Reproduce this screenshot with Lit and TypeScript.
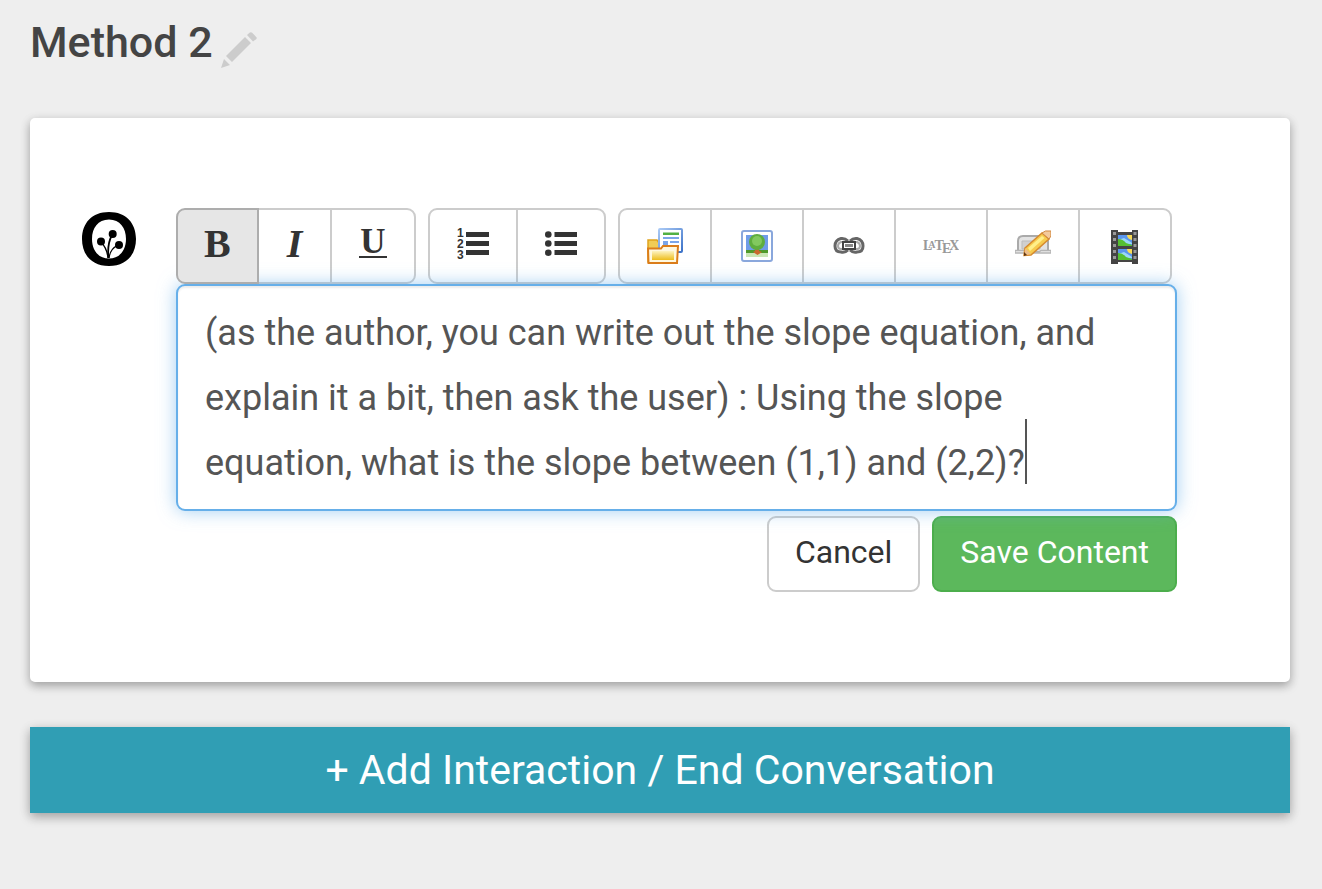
import { LitElement, html, css, svg } from "lit";
import { customElement, state } from "lit/decorators.js";

const pencil = svg`
  <svg viewBox="0 0 36 36" width="36" height="36" aria-hidden="true">
    <path fill="#ccc" d="M0 36 3 27 9 33ZM5 24 24 5 30 11 11 30ZM26 3 28.800.600Q30 -.300 31.200.800L35.200 5Q36.300 6 35.200 7.200L32 9.500Z"/>
  </svg>`;

const logo = svg`
  <svg viewBox="0 0 54 54" width="54" height="54" role="img" aria-label="Author">
    <path fill="#000" fill-rule="evenodd" d="M27 0C44 0 54 11 54 27S44 54 27 54 0 43 0 27 10 0 27 0ZM27 7.500C16 7.500 10 16 10 27S16 46.500 27 46.500 44 38 44 27 38 7.500 27 7.500Z"/>
    <g fill="none" stroke="#000" stroke-width="1.300"><path d="M26 46Q25 36 19 30"/><path stroke-width="1.800" d="M26.500 46Q25 32 30 23"/><path d="M27 46Q28 37 36 33"/></g>
    <circle cx="19" cy="29.500" r="4"/><circle cx="30.700" cy="22" r="4"/><circle cx="37" cy="33" r="4"/>
  </svg>`;

const orderedIcon = svg`
  <svg viewBox="0 0 32 36" width="32" height="36" aria-hidden="true">
    <g class="numeral"><text x="0" y="9">1</text><text x="0" y="20">2</text><text x="0" y="31">3</text></g>
    <path fill="#333" d="M9 4H32V9H9ZM9 13H32V18H9ZM9 22H32V27H9Z"/>
  </svg>`;

const bulletIcon = svg`
  <svg viewBox="0 0 32 36" width="32" height="36" aria-hidden="true">
    <g fill="#333"><circle cx="3.300" cy="6.500" r="3.300"/><circle cx="3.300" cy="15.500" r="3.300"/><circle cx="3.300" cy="24.700" r="3.300"/>
    <path d="M9.500 4H32V9H9.500ZM9.500 13H32V18H9.500ZM9.500 22H32V27H9.500Z"/></g>
  </svg>`;

const folderIcon = svg`
  <svg viewBox="0 0 36 36" width="36" height="36" aria-hidden="true">
    <defs>
      <linearGradient id="gold" x2="0" y2="1"><stop stop-color="#fdf3c0"/><stop offset="1" stop-color="#edbd1c"/></linearGradient>
      <linearGradient id="sheet" x2="1" y2="1"><stop stop-color="#a9c9f5"/><stop offset="1" stop-color="#3c72c8"/></linearGradient>
    </defs>
    <path fill="#f0cc55" stroke="#dfa21c" stroke-width="1.500" d="M1 34V12H10L12 15H30V34Z"/>
    <rect x="12" y="1" width="23" height="23" rx="1" fill="#fff" stroke="url(#sheet)" stroke-width="2"/>
    <path fill="#52b043" d="M16 4.500H32V7H16Z"/>
    <path fill="#7ba5e8" d="M16 9H32V11H16ZM16 13H21V18H16ZM23 13H32V15H23ZM23 17H32V19H23Z"/>
    <path fill="#fff8de" stroke="#db7d1a" stroke-width="2" d="M1 20.500H14L16 18H31L30 35H1.500Z"/>
    <path fill="url(#gold)" d="M5 23H27V32H5Z"/>
  </svg>`;

const imageIcon = svg`
  <svg viewBox="0 0 36 36" width="36" height="36" aria-hidden="true">
    <rect x="3" y="3" width="30" height="30" rx="2" fill="#fff" stroke="#89a7dc" stroke-width="2"/>
    <path fill="#6f9ce8" d="M7 7H29V23H7Z"/>
    <path fill="#c9e6b4" d="M7 23H29V29H7Z"/><path fill="#4f9a2b" d="M7 22H29V25H7Z"/>
    <path fill="#c9692d" d="M16 20H20V23L23 24 18.500 27 14 24 16 23Z"/>
    <circle cx="18" cy="14" r="8" fill="#5fae3e"/><circle cx="18" cy="13" r="5" fill="#82c95f"/>
  </svg>`;

const linkIcon = svg`
  <svg viewBox="0 0 36 36" width="36" height="36" aria-hidden="true">
    <g fill="none" stroke="#666" stroke-width="3">
      <path d="M17 13Q14 10 10 10.500 4 12 4 18T10 24Q14 25 17 22"/>
      <path d="M19 13Q22 10 26 10.500 32 12 32 18T26 24Q22 25 19 22"/>
      <path stroke="#aaa" stroke-width="2" d="M14 14H10Q7 15 7 18T10 21H14M22 14H26Q29 15 29 18T26 21H22"/>
      <rect x="12" y="14" width="12" height="7" stroke="#444" stroke-width="2"/>
    </g>
    <path stroke="#888" stroke-width="3" d="M14 17.500H22"/>
  </svg>`;

const latexIcon = svg`
  <svg viewBox="0 0 36 36" width="36" height="36" aria-hidden="true">
    <text class="latex" x="0" y="22">L<tspan class="latex-small" dx="-4" dy="-2">A</tspan><tspan dx="-1" dy="2">T</tspan><tspan dx="-2" dy="3">E</tspan><tspan dx="-2" dy="-3">X</tspan></text>
  </svg>`;

const scratchIcon = svg`
  <svg viewBox="0 0 36 36" width="36" height="36" aria-hidden="true">
    <path fill="#e3e3e3" stroke="#aaa" stroke-width="2" d="M3 24V13Q3 8 8 8H29Q33 8 33 13V24Z"/>
    <path fill="#d0d0d0" stroke="#bbb" d="M7 13H25V21H7Z"/>
    <path fill="#eee" stroke="#b5b5b5" stroke-width="1.500" d="M0 22.500H10L12 24H24L26 22.500H36V25H0Z"/>
    <path fill="#f7cb4f" stroke="#d68a2e" stroke-width="1.500" d="M10 20 27 5 34 11 16 27 9 27.500Z"/>
    <path fill="#fff08a" d="M13 20 27 8 29.500 10 15 23Z"/>
    <path fill="#f3ca9c" stroke="#d1873e" d="M27 5 30.500 3H36V8L34 11Z"/>
    <path fill="#ebbd88" d="M10 20 16 26 9.500 27.500Z"/><path fill="#603510" d="M9 24 12 27 9 28Z"/>
  </svg>`;

const filmIcon = svg`
  <svg viewBox="0 0 36 36" width="36" height="36" aria-hidden="true">
    <path fill="#444" d="M4 2H11V4H25V2H31V36H25V34H11V36H4Z"/>
    <path fill="#5a96ef" d="M11 7H25V18H11ZM11 21H25V32H11Z"/>
    <path fill="#f9dc55" d="M20 7H25V12Q20 11 20 7ZM20 21H25V26Q20 25 20 21Z"/>
    <path fill="#9bd8f6" d="M11 12 17 10 22 13 25 15V16H11ZM11 26 17 24 22 27 25 29V30H11Z"/>
    <path fill="#55bf32" d="M11 11Q16 11 19 15L25 17V18H11ZM11 25Q16 25 19 29L25 31V32H11Z"/>
    <path stroke="#999" stroke-width="3" stroke-dasharray="3 3" d="M7.500 4V34M28 4V34"/>
  </svg>`;

interface Tool {
  label: string;
  icon: unknown;
}

const groups: Tool[][] = [
  [
    { label: "Bold", icon: html`<span class="glyph">B</span>` },
    { label: "Italic", icon: html`<span class="glyph slanted">I</span>` },
    { label: "Underline", icon: html`<span class="glyph lined">U</span>` },
  ],
  [
    { label: "Ordered list", icon: orderedIcon },
    { label: "Unordered list", icon: bulletIcon },
  ],
  [
    { label: "Insert collapsible", icon: folderIcon },
    { label: "Insert image", icon: imageIcon },
    { label: "Insert link", icon: linkIcon },
    { label: "Insert formula", icon: latexIcon },
    { label: "Insert scratchpad", icon: scratchIcon },
    { label: "Insert video", icon: filmIcon },
  ],
];

@customElement("app-root")
export class AppRoot extends LitElement {
  @state() private active = "Bold";

  static styles = css`
    * { box-sizing: border-box; }
    :host {
      display: block;
      box-sizing: border-box;
      min-height: 100vh;
      padding: 16px 32px 32px 30px;
      background: #eee;
      color: #333;
      font-family: Roboto, sans-serif;
    }
    svg { display: block; flex: none; }
    button { font-family: inherit; cursor: pointer; }
    .heading { display: flex; align-items: flex-start; gap: 8px; height: 102px; }
    h1 { margin: 0; font-size: 43px; line-height: 52px; font-weight: 500; color: #444; }
    .rename { margin-top: 16px; padding: 0; border: 0; background: none; }
    .card {
      display: flex;
      gap: 40px;
      padding: 90px 113px 90px 52px;
      border-radius: 5px;
      background: #fff;
      box-shadow: 0 4px 10px rgba(0, 0, 0, 0.28), 0 2px 12px rgba(0, 0, 0, 0.08);
    }
    .avatar { margin-top: 4px; }
    .editor { flex: 1; min-width: 0; }
    .toolbar { display: flex; gap: 12px; }
    .group { display: flex; }
    .tool {
      display: flex;
      align-items: center;
      justify-content: center;
      height: 76px;
      padding: 0 27px;
      border: 2px solid #ccc;
      background: #fff;
      color: #333;
    }
    .tool + .tool { margin-left: -2px; }
    .tool:first-child { border-radius: 9px 0 0 9px; }
    .tool:last-child { border-radius: 0 9px 9px 0; }
    .tool.active { z-index: 1; padding: 0 26px; border-color: #adadad; background: #e6e6e6; }
    .glyph { padding-bottom: 4px; font: bold 40px/48px "Liberation Serif", serif; }
    .slanted { padding: 0 1px 4px; font-style: italic; }
    .lined { margin-bottom: 6px; padding: 0 1px; border-bottom: 2px solid #333; font-size: 35px; line-height: 28px; }
    .numeral { font: bold 12px "Liberation Sans", sans-serif; fill: #333; }
    .latex { font: bold 14px "Liberation Serif", serif; fill: #999; }
    .latex-small { font-size: 10px; }
    .field { position: relative; }
    textarea {
      display: block;
      width: 100%;
      height: 227px;
      padding: 15px 26px 12px 27px;
      border: 2px solid #66afe9;
      border-radius: 9px;
      outline: 0;
      resize: none;
      overflow: hidden;
      background: #fff;
      color: #555;
      font: 36px/65px Roboto, sans-serif;
      box-shadow: inset 0 2px 2px rgba(0, 0, 0, 0.075), 0 0 18px rgba(102, 175, 233, 0.6);
    }
    .caret { position: absolute; left: 849px; top: 135px; width: 2px; height: 65px; background: #555; }
    .actions { display: flex; justify-content: flex-end; gap: 12px; margin-top: 5px; }
    .action {
      height: 76px;
      padding: 0 26px 4px;
      border: 2px solid #ccc;
      border-radius: 9px;
      background: #fff;
      color: #333;
      font-size: 32px;
    }
    .save { border-color: #4cae4c; background: #5cb85c; color: #fff; }
    .add {
      display: block;
      width: 100%;
      height: 86px;
      margin-top: 45px;
      border: 0;
      background: #309eb4;
      color: #fff;
      font-size: 41px;
      box-shadow: 0 4px 10px rgba(0, 0, 0, 0.28), 0 2px 12px rgba(0, 0, 0, 0.08);
    }
  `;

  render() {
    return html`
      <header class="heading">
        <h1>Method 2</h1>
        <button class="rename" aria-label="Rename">${pencil}</button>
      </header>
      <main>
        <section class="card">
          <div class="avatar">${logo}</div>
          <div class="editor">
            <div class="toolbar" role="toolbar" aria-label="Formatting">
              ${groups.map(
                (group) => html`<div class="group">
                  ${group.map(
                    (tool) => html`<button
                      class="tool ${tool.label === this.active ? "active" : ""}"
                      aria-label=${tool.label}
                      @click=${() => (this.active = tool.label)}
                    >${tool.icon}</button>`
                  )}
                </div>`
              )}
            </div>
            <div class="field">
              <textarea
                aria-label="Content"
                spellcheck="false"
                .value=${"(as the author, you can write out the slope equation, and explain it a bit, then ask the user) : Using the slope\nequation, what is the slope between (1,1) and (2,2)?"}
              ></textarea>
              <span class="caret"></span>
            </div>
            <div class="actions">
              <button class="action">Cancel</button>
              <button class="action save">Save Content</button>
            </div>
          </div>
        </section>
        <button class="add">+ Add Interaction / End Conversation</button>
      </main>
    `;
  }
}
